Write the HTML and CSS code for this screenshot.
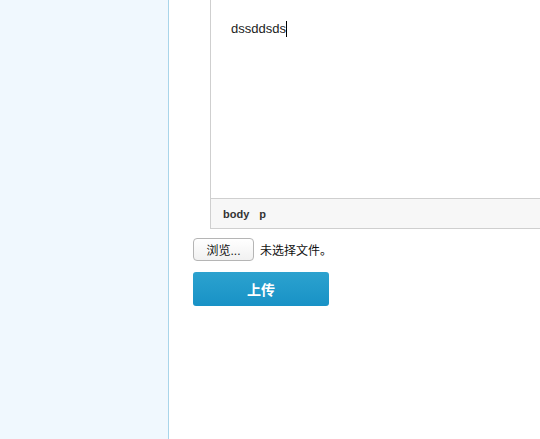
FILE: index.html
```html
<!DOCTYPE html>
<html>
<head>
<meta charset="utf-8">
<link rel="stylesheet" href="styles.css">
</head>
<body>
<div class="page">
  <aside class="sidebar"></aside>
  <main class="main">
    <div class="editor">
      <div class="editor-body"><span class="text">dssddsds</span><span class="caret"></span></div>
      <div class="status"><span>body</span><span>p</span></div>
    </div>
    <div class="file-row">
      <span class="browse">浏览...</span>
      <span class="nofile">未选择文件。</span>
    </div>
    <button class="upload">上传</button>
  </main>
</div>
</body>
</html>
```
FILE: styles.css
```css
html, body {
  margin: 0;
  padding: 0;
  height: 100%;
  overflow: hidden;
  background: #fff;
  font-family: "Liberation Sans", Arial, "Noto Sans CJK SC", sans-serif;
}
.page {
  display: flex;
  height: 439px;
}
.sidebar {
  width: 168px;
  flex: none;
  background: #f0f8fe;
  border-right: 1px solid #a9d5ea;
}
.main {
  flex: 1;
  overflow: hidden;
  padding-left: 24px;
}
.editor {
  margin-left: 17px;
  width: 420px;
  border-left: 1px solid #cfcfcf;
}
.editor-body {
  height: 198px;
  box-sizing: border-box;
  padding: 20px 0 0 20px;
  font-size: 13px;
  color: #222;
  display: flex;
  align-items: flex-start;
}
.text {
  line-height: 18px;
}
.caret {
  width: 1px;
  height: 16px;
  margin-top: 1px;
  background: #000;
}
.status {
  height: 31px;
  box-sizing: border-box;
  background: #f7f7f7;
  border-top: 1px solid #cfcfcf;
  border-bottom: 1px solid #cfcfcf;
  display: flex;
  align-items: center;
  gap: 10px;
  padding-left: 12px;
  font-size: 11px;
  font-weight: bold;
  color: #333;
}
.file-row {
  display: flex;
  align-items: center;
  margin-top: 8px;
  height: 24px;
}
.browse {
  width: 61px;
  height: 23px;
  box-sizing: border-box;
  border: 1px solid #b5b5b5;
  border-radius: 4px;
  background: linear-gradient(#ffffff, #f1f1f1);
  font-size: 12px;
  color: #111;
  display: flex;
  align-items: center;
  justify-content: center;
}
.nofile {
  margin-left: 6px;
  font-size: 12px;
  color: #111;
}
.upload {
  display: block;
  margin-top: 11px;
  width: 136px;
  height: 34px;
  border: none;
  border-radius: 3px;
  background: linear-gradient(#2ca2cf, #1892c6);
  color: #fff;
  font-family: "Liberation Sans", Arial, "Noto Sans CJK SC", sans-serif;
  font-size: 14px;
  font-weight: bold;
  padding: 0;
}
```
